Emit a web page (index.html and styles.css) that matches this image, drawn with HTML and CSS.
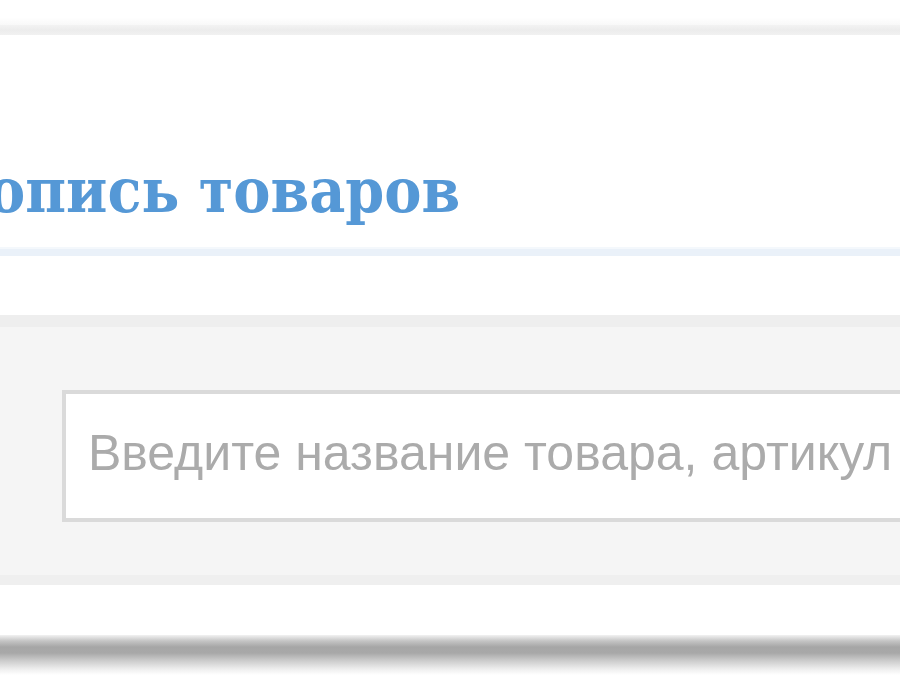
FILE: index.html
```html
<!DOCTYPE html>
<html lang="ru">
<head>
<meta charset="utf-8">
<title>Опись товаров</title>
<link rel="stylesheet" href="styles.css">
</head>
<body>
<div class="page">
  <div class="top-space"></div>
  <div class="top-band"></div>
  <header class="header">
    <h1 class="title">опись товаров</h1>
  </header>
  <div class="gap"></div>
  <section class="search-panel">
    <div class="search-box">
      <input class="search-input" type="text" placeholder="Введите название товара, артикул">
    </div>
  </section>
  <div class="gap-bottom"></div>
  <div class="bottom-shadow"></div>
</div>
</body>
</html>
```
FILE: styles.css
```css
html, body {
  margin: 0;
  padding: 0;
  background: #ffffff;
  overflow: hidden;
}
.page {
  width: 900px;
  height: 700px;
  display: flex;
  flex-direction: column;
  overflow: hidden;
}
.top-space {
  height: 25px;
  background: linear-gradient(#ffffff 70%, #f8f8f8);
}
.top-band {
  height: 10px;
  background: linear-gradient(#f3f3f3, #ececec 50%, #f1f1f1);
}
.header {
  height: 214px;
  display: flex;
  align-items: flex-end;
  border-bottom: 7px solid #eaf1f9;
  box-shadow: 0 -2px 0 #f4f8fc inset;
}
.title {
  margin: 0 0 27px -12px;
  font-family: "DejaVu Serif Condensed", "Liberation Serif", serif;
  font-weight: bold;
  font-size: 62px;
  line-height: 1;
  color: #5598d6;
  white-space: nowrap;
}
.gap {
  height: 59px;
}
.search-panel {
  background: #f5f5f5;
  border-top: 12px solid #eeeeee;
  border-bottom: 10px solid #efefef;
  padding: 63px 0 53px 62px;
}
.search-box {
  width: 900px;
}
.search-input {
  box-sizing: border-box;
  width: 100%;
  height: 132px;
  border: 4px solid #dadada;
  background: #ffffff;
  padding: 0 0 7px 22px;
  font-family: "Liberation Sans", Arial, sans-serif;
  font-size: 50px;
  color: #333;
  outline: none;
}
.search-input::placeholder {
  color: #ababab;
}
.gap-bottom {
  height: 50px;
}
.bottom-shadow {
  height: 40px;
  background: linear-gradient(#f2f2f2, #c4c4c4 15%, #a6a6a6 30%, #a8a8a8 45%, #c8c8c8 62%, #eeeeee 85%, #ffffff);
}
```
